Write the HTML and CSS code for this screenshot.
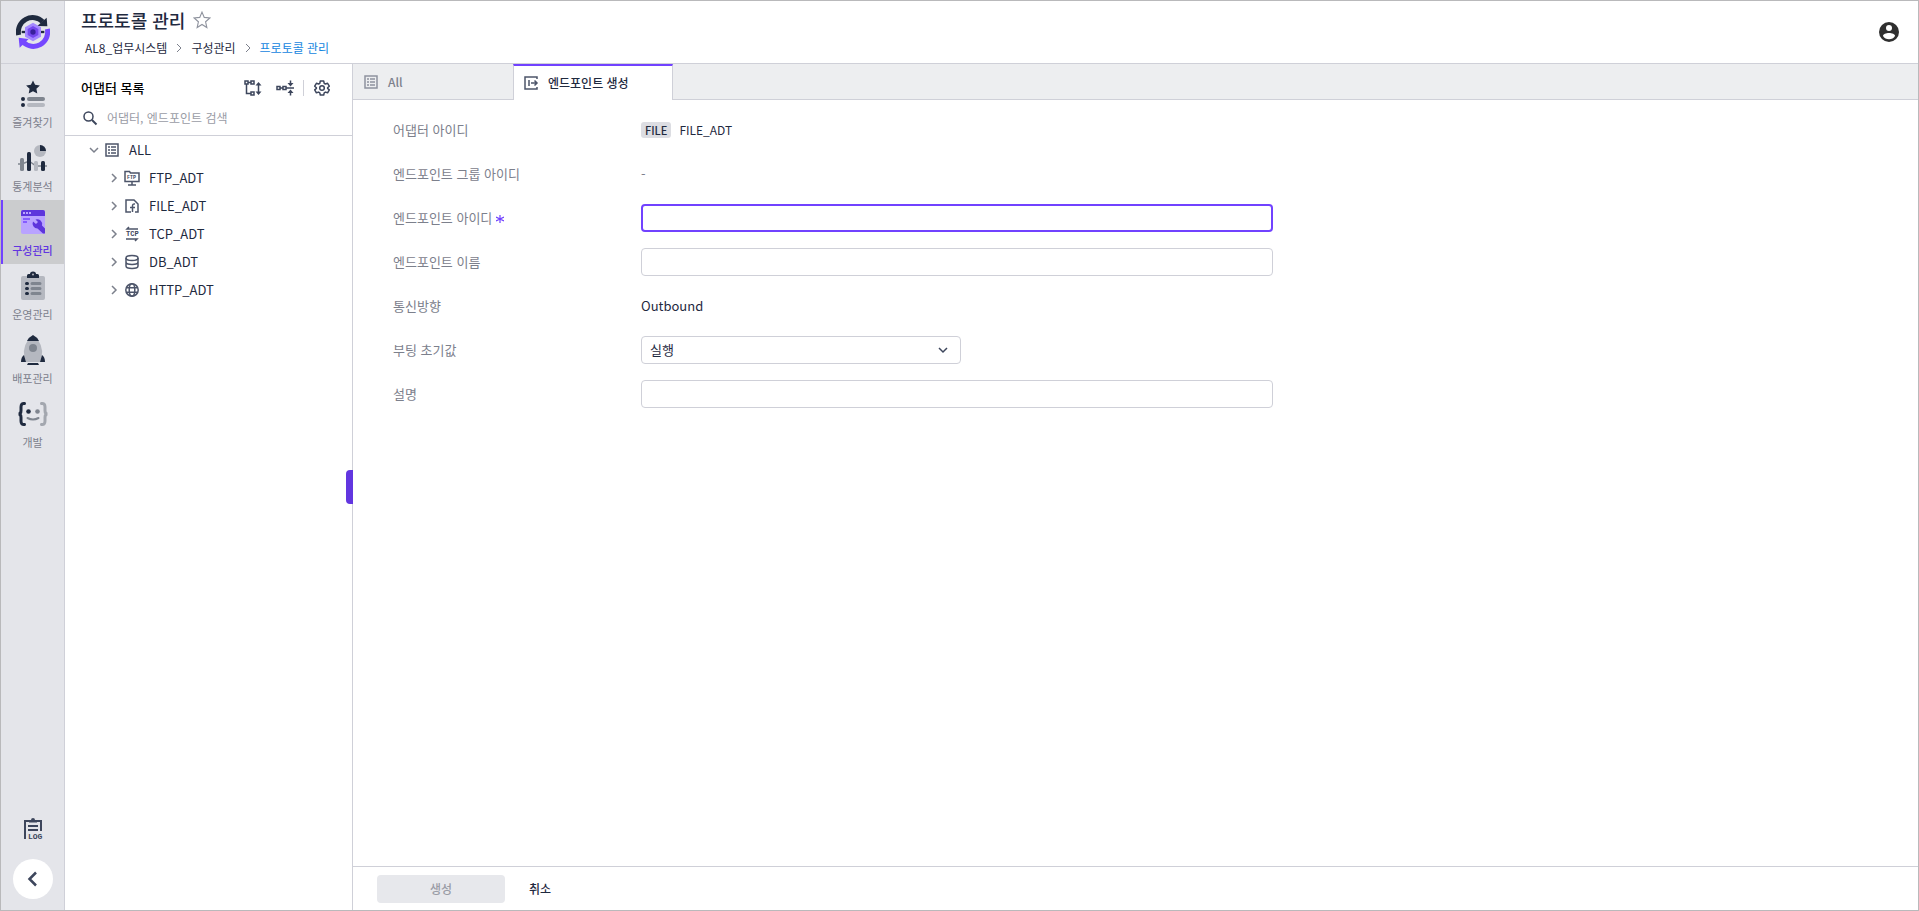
FILE: index.html
```html
<!DOCTYPE html>
<html lang="ko">

<head>
    <meta charset="UTF-8">
    <meta name="viewport" content="width=device-width, initial-scale=1.0">
    <title>프로토콜 관리</title>
    <link rel="stylesheet" href="styles.css">
</head>

<body>
    <div class="app">
        <nav class="sidebar">
            <a class="logo" href="#" aria-label="Home">
                <svg width="34" height="34" viewBox="0 0 102 102">
                    <path d="M8 60A43 43 0 0 1 80 20" fill="none" stroke="#1f2a3f" stroke-width="15" />
                    <path d="M92 8L94 34L64 33Z" fill="#1f2a3f" />
                    <path d="M94 42A43 43 0 0 1 22 82" fill="none" stroke="#7547ff" stroke-width="15" />
                    <path d="M8 68L11 98L38 72Z" fill="#7547ff" />
                    <path d="M17 51H85" stroke="#1f2a3f" stroke-width="7" />
                    <path d="M51 23L75 37V65L51 79L27 65V37Z" fill="#a487ff" />
                    <path d="M51 33L67 42V60L51 69L35 60V42Z" fill="#7547ee" />
                    <circle cx="51" cy="51" r="8" fill="#38209c" />
                </svg>
            </a>
            <div class="menu">
                <a class="menu-item" href="#">
                    <svg width="32" height="32" viewBox="0 0 32 32">
                        <path d="M16 2.5l2.1 4.3 4.8.7-3.5 3.3.9 4.8-4.3-2.3-4.3 2.3.9-4.8-3.5-3.3 4.8-.7z" fill="#1f2a3f" />
                        <circle cx="6" cy="21" r="2" fill="#1f2a3f" />
                        <circle cx="6" cy="27" r="2" fill="#1f2a3f" />
                        <rect x="10" y="19" width="18" height="4" rx="2" fill="#7f858f" />
                        <rect x="10" y="25" width="18" height="4" rx="2" fill="#b5b8c0" />
                    </svg>
                    <span>즐겨찾기</span>
                </a>
                <a class="menu-item" href="#">
                    <svg width="32" height="32" viewBox="0 0 32 32">
                        <circle cx="23" cy="9" r="6" fill="#b5b8c0" />
                        <path d="M23 9V3a6 6 0 0 1 6 6z" fill="#1f2a3f" />
                        <path d="M1 22h4l7-3 7 5h11" fill="none" stroke="#7f858f" stroke-width="1.5" />
                        <rect x="3" y="16" width="4" height="13" rx="1.5" fill="#7f858f" />
                        <rect x="10" y="10" width="4" height="19" rx="1.5" fill="#1f2a3f" />
                        <rect x="17" y="19" width="4" height="10" rx="1.5" fill="#b5b8c0" />
                        <rect x="24" y="19" width="4" height="10" rx="1.5" fill="#1f2a3f" />
                    </svg>
                    <span>통계분석</span>
                </a>
                <a class="menu-item active" href="#">
                    <svg width="32" height="32" viewBox="0 0 32 32">
                        <rect x="4" y="4" width="24" height="24" rx="2" fill="#b9a3ff" />
                        <path d="M6 4h20a2 2 0 0 1 2 2v4H4V6a2 2 0 0 1 2-2z" fill="#5d35dc" />
                        <path d="M6 7h2M9 7h2M12 7h2" stroke="#b9a3ff" stroke-width="2" />
                        <path d="M6 13h7M6 16h4" stroke="#7547ff" stroke-width="1.5" />
                        <path d="M16 15.5l3 2.5 2-2-2.5-2.5a5 5 0 0 1 6.5 6l3 3v5h-2l-5.500-5a5 5 0 0 1-4.500-7z" fill="#5d35dc" />
                    </svg>
                    <span>구성관리</span>
                </a>
                <a class="menu-item" href="#">
                    <svg width="32" height="32" viewBox="0 0 32 32">
                        <rect x="4" y="6" width="24" height="24" rx="2" fill="#b5b8c0" />
                        <path d="M10 8V5.5q0-1.5 1.5-1.5H13a3 2.5 0 0 1 6 0h1.5Q22 4 22 5.5V8z" fill="#1f2a3f" />
                        <circle cx="16" cy="4.5" r="1" fill="#b5b8c0" />
                        <path d="M9.5 13.5h1M9.5 18.5h1M9.5 23.5h1" stroke="#1f2a3f" stroke-width="3" stroke-linecap="round" />
                        <path d="M15 13.5h8M15 18.5h8M15 23.5h8" stroke="#7f858f" stroke-width="3" stroke-linecap="round" />
                    </svg>
                    <span>운영관리</span>
                </a>
                <a class="menu-item" href="#">
                    <svg width="32" height="32" viewBox="0 0 32 32">
                        <path d="M11 6h10q7 10 2 22H9Q4 16 11 6z" fill="#b5b8c0" />
                        <path d="M16 1q4 2 6 6H10q2-4 6-6z" fill="#1f2a3f" />
                        <circle cx="16" cy="14" r="4" fill="#7f858f" />
                        <path d="M7 21L9 28H4q0-5 3-7zM25 21l-2 7h5q0-5-3-7zM11 29h10l1 2H10z" fill="#1f2a3f" />
                    </svg>
                    <span>배포관리</span>
                </a>
                <a class="menu-item" href="#">
                    <svg width="32" height="32" viewBox="0 0 32 32" fill="none" stroke-width="3" stroke-linecap="round">
                        <path d="M7.5 5.5Q4 5 4 9v3.5Q4 16 1.500 16 4 16 4 19.5V23q0 4 3.5 3.5" stroke="#1f2a3f" />
                        <path d="M24.5 5.5Q28 5 28 9v3.5q0 3.5 2.5 3.5Q28 16 28 19.5V23q0 4-3.5 3.5" stroke="#a3a7af" />
                        <path d="M10.5 20q5.5 3 11 0" stroke="#7f858f" stroke-width="2" />
                        <circle cx="11.5" cy="13.5" r="2.3" fill="#1f2a3f" />
                        <circle cx="20.5" cy="13.5" r="2.3" fill="#7f858f" />
                    </svg>
                    <span>개발</span>
                </a>
            </div>
            <div class="sidebar-bottom">
                <button type="button" class="icon-btn" aria-label="Log">
                    <svg width="24" height="24" viewBox="0 0 24 24">
                        <path d="M4 22V4h16v10" fill="none" stroke="#3d465c" stroke-width="2" />
                        <path d="M8 5.5V3h2a2 2 0 0 1 4 0h2v2.5z" fill="#3d465c" />
                        <path d="M7 9h10M7 13h10" stroke="#3d465c" stroke-width="2" />
                        <text x="7" y="22" class="glyph glyph-log">LOG</text>
                    </svg>
                </button>
                <button type="button" class="collapse-btn" aria-label="Collapse menu">
                    <svg width="16" height="16" viewBox="0 0 16 16">
                        <path d="M11 1.5L4.5 8 11 14.5" fill="none" stroke="#3d465c" stroke-width="2.5" />
                    </svg>
                </button>
            </div>
        </nav>

        <div class="page">
            <header class="header">
                <div>
                    <div class="title-row">
                        <h1>프로토콜 관리</h1>
                        <button type="button" class="icon-btn" aria-label="즐겨찾기 추가">
                            <svg width="18" height="18" viewBox="0 0 16 16">
                                <path d="M8 1l2 4.7 5 .5-3.8 3.4 1.1 5.1L8 12l-4.3 2.7 1.1-5.1L1 6.200l5-.5z" fill="none" stroke="#8f939e" />
                            </svg>
                        </button>
                    </div>
                    <div class="breadcrumb">
                        <a href="#">AL8_업무시스템</a>
                        <svg width="8" height="8" viewBox="0 0 8 8"><path d="M2 0l4 4-4 4" /></svg>
                        <a href="#">구성관리</a>
                        <svg width="8" height="8" viewBox="0 0 8 8"><path d="M2 0l4 4-4 4" /></svg>
                        <a class="current" href="#">프로토콜 관리</a>
                    </div>
                </div>
                <button type="button" class="icon-btn" aria-label="User">
                    <svg width="24" height="24" viewBox="0 0 24 24">
                        <circle cx="12" cy="12" r="10" fill="#2f2f2f" />
                        <circle cx="12" cy="8" r="3" fill="#fff" />
                        <path d="M6 16c0-4 12-4 12 0q-2 3.2-6 3.2T6 16z" fill="#fff" />
                    </svg>
                </button>
            </header>

            <div class="body">
                <aside class="tree-panel">
                    <div class="tree-head">
                        <h2>어댑터 목록</h2>
                        <div class="tools">
                            <button type="button" class="icon-btn" aria-label="Expand all">
                                <svg width="20" height="20" viewBox="0 0 20 20" fill="none" stroke="#3d465c" stroke-width="1.5">
                                    <path d="M2 3h3v3H2zM8 3h3v3H8zM8 14h3v3H8zM5 4.5h3M3.500 6v9.500H8M15.500 6v9" />
                                    <path d="M15.500 4l3 3.500h-6zM15.500 17l3-3.500h-6z" fill="#3d465c" stroke="none" />
                                </svg>
                            </button>
                            <button type="button" class="icon-btn" aria-label="Collapse all">
                                <svg width="20" height="20" viewBox="0 0 20 20" fill="none" stroke="#3d465c" stroke-width="1.5">
                                    <path d="M2 8.500h3v3H2zM8 8.500h3v3H8zM5 10h3M11 10h8M15.500 2.500V6M15.500 17.500V14" />
                                    <path d="M15.500 8.500l3-3.500h-6zM15.500 11.500l3 3.500h-6z" fill="#3d465c" stroke="none" />
                                </svg>
                            </button>
                            <span class="divider"></span>
                            <button type="button" class="icon-btn" aria-label="Settings">
                                <svg width="20" height="20" viewBox="0 0 20 20" fill="none" stroke="#3d465c" stroke-width="1.5" stroke-linejoin="round">
                                    <path d="M8.300 3h3.400l.5 2.300 1.200.7 2.200-.7 1.700 2.900-1.700 1.600v.6l1.700 1.500-1.700 2.900-2.200-.7-1.200.7-.5 2.200H8.300l-.5-2.200-1.200-.7-2.200.7-1.700-2.900 1.700-1.500v-.6L2.700 8.200l1.700-2.900 2.200.7 1.200-.7z" />
                                    <circle cx="10" cy="10" r="2.3" />
                                </svg>
                            </button>
                        </div>
                    </div>
                    <div class="search">
                        <svg width="16" height="16" viewBox="0 0 16 16" fill="none" stroke="#3d465c">
                            <circle cx="6.500" cy="6.500" r="4.500" stroke-width="1.500" />
                            <path d="M10 10l4.500 4.500" stroke-width="2" />
                        </svg>
                        <input type="text" aria-label="검색" placeholder="어댑터, 엔드포인트 검색">
                    </div>
                    <ul class="tree">
                        <li>
                            <svg class="arrow" width="12" height="12" viewBox="0 0 12 12"><path d="M2 4l4 4 4-4" /></svg>
                            <svg class="node-icon" width="16" height="16" viewBox="0 0 16 16">
                                <path d="M2 2h12v12H2z" />
                                <path d="M4 5h2M7 5h5M4 8h2M7 8h5M4 11h2M7 11h5" />
                            </svg>
                            <a href="#">ALL</a>
                        </li>
                        <li class="child">
                            <svg class="arrow" width="12" height="12" viewBox="0 0 12 12"><path d="M4 2l4 4-4 4" /></svg>
                            <svg class="node-icon" width="16" height="16" viewBox="0 0 16 16">
                                <path d="M1 11.5v-10h4.500l1 1.500H15v8.500zM8 12v3M4 15h8" />
                                <text x="3" y="9" class="glyph glyph-ftp">FTP</text>
                            </svg>
                            <a href="#">FTP_ADT</a>
                        </li>
                        <li class="child">
                            <svg class="arrow" width="12" height="12" viewBox="0 0 12 12"><path d="M4 2l4 4-4 4" /></svg>
                            <svg class="node-icon" width="16" height="16" viewBox="0 0 16 16">
                                <path d="M7 14H2V2h8l4 4v8h-3" />
                                <path d="M11 6Q8.500 5.500 8.500 8v6M6 9.500h5" />
                            </svg>
                            <a href="#">FILE_ADT</a>
                        </li>
                        <li class="child">
                            <svg class="arrow" width="12" height="12" viewBox="0 0 12 12"><path d="M4 2l4 4-4 4" /></svg>
                            <svg class="node-icon" width="16" height="16" viewBox="0 0 16 16">
                                <path d="M14 3H3l2-2M2 13h11l-2 2" />
                                <text x="2" y="10" class="glyph glyph-tcp">TCP</text>
                            </svg>
                            <a href="#">TCP_ADT</a>
                        </li>
                        <li class="child">
                            <svg class="arrow" width="12" height="12" viewBox="0 0 12 12"><path d="M4 2l4 4-4 4" /></svg>
                            <svg class="node-icon" width="16" height="16" viewBox="0 0 16 16">
                                <ellipse cx="8" cy="4" rx="6" ry="2.5" />
                                <path d="M2 4v8c0 3.300 12 3.300 12 0V4M2 8c0 3.300 12 3.300 12 0" />
                            </svg>
                            <a href="#">DB_ADT</a>
                        </li>
                        <li class="child">
                            <svg class="arrow" width="12" height="12" viewBox="0 0 12 12"><path d="M4 2l4 4-4 4" /></svg>
                            <svg class="node-icon" width="16" height="16" viewBox="0 0 16 16">
                                <circle cx="8" cy="8" r="6.2" />
                                <ellipse cx="8" cy="8" rx="2.8" ry="6.2" />
                                <path d="M2.500 5.800h11M2.500 10.200h11" />
                            </svg>
                            <a href="#">HTTP_ADT</a>
                        </li>
                    </ul>
                    <button type="button" class="panel-handle" aria-label="Toggle panel"></button>
                </aside>

                <main class="content">
                    <div class="tabs">
                        <button type="button" class="tab">
                            <svg class="node-icon" width="16" height="16" viewBox="0 0 16 16">
                                <path d="M2 2h12v12H2z" />
                                <path d="M4 5h2M7 5h5M4 8h2M7 8h5M4 11h2M7 11h5" />
                            </svg>
                            <span>All</span>
                        </button>
                        <button type="button" class="tab active">
                            <svg class="node-icon" width="16" height="16" viewBox="0 0 16 16">
                                <path d="M14 4V2H2v12h12v-2M6 5v6M8 8h6M11.500 5.500L14 8l-2.500 2.500" />
                            </svg>
                            <span>엔드포인트 생성</span>
                        </button>
                    </div>

                    <form class="form" id="endpointForm">
                        <div class="form-row">
                            <span class="label">어댑터 아이디</span>
                            <div class="value value-id"><span class="badge">FILE</span>FILE_ADT</div>
                        </div>
                        <div class="form-row">
                            <span class="label">엔드포인트 그룹 아이디</span>
                            <div class="value muted">-</div>
                        </div>
                        <div class="form-row">
                            <label class="label" for="endpointId">엔드포인트 아이디
                                <svg width="8" height="8" viewBox="0 0 8 8"><path d="M4 0v8M0 2l8 4M8 2L0 6" stroke="#7142ff" stroke-width="1.200" /></svg>
                            </label>
                            <input type="text" class="focused" id="endpointId" name="endpointId" required>
                        </div>
                        <div class="form-row">
                            <label class="label" for="endpointName">엔드포인트 이름</label>
                            <input type="text" id="endpointName" name="endpointName">
                        </div>
                        <div class="form-row">
                            <span class="label">통신방향</span>
                            <div class="value">Outbound</div>
                        </div>
                        <div class="form-row">
                            <label class="label" for="bootValue">부팅 초기값</label>
                            <div class="select-box">
                                <select id="bootValue" name="bootValue">
                                    <option value="run">실행</option>
                                    <option value="stop">중지</option>
                                </select>
                                <svg width="12" height="12" viewBox="0 0 12 12"><path d="M2 4l4 4 4-4" fill="none" stroke="#3d465c" stroke-width="1.500" /></svg>
                            </div>
                        </div>
                        <div class="form-row">
                            <label class="label" for="description">설명</label>
                            <input type="text" id="description" name="description">
                        </div>
                    </form>

                    <footer class="actions">
                        <button type="submit" class="submit-btn" form="endpointForm" disabled>생성</button>
                        <button type="button" class="cancel-btn">취소</button>
                    </footer>
                </main>
            </div>
        </div>
    </div>
</body>

</html>
```
FILE: styles.css
```css
* {
    box-sizing: border-box;
}

body {
    margin: 0;
    color: #1f2a3f;
    font-family: "Noto Sans CJK KR", "Noto Sans", sans-serif;
    font-size: 13px;
    line-height: 20px;
}

h1,
h2,
ul {
    margin: 0;
    padding: 0;
}

a {
    color: inherit;
    text-decoration: none;
}

button,
input,
select {
    margin: 0;
    font: inherit;
    color: inherit;
}

button {
    padding: 0;
    border: none;
    background: none;
    cursor: pointer;
}

svg {
    flex-shrink: 0;
}

.app {
    display: flex;
    height: 100vh;
    overflow: hidden;
    border: 1px solid #b9b9bb;
}

/* left menu */
.sidebar {
    display: flex;
    flex-direction: column;
    width: 64px;
    flex-shrink: 0;
    background-color: #e4e5ea;
    border-right: 1px solid #cfd0d8;
}

.logo {
    display: flex;
    align-items: center;
    justify-content: center;
    height: 63px;
    border-bottom: 1px solid #cfd0d8;
}

.menu {
    flex: 1;
    padding-top: 8px;
}

.menu-item {
    display: flex;
    flex-direction: column;
    align-items: center;
    gap: 3px;
    height: 64px;
    padding-top: 6px;
    color: #7c808c;
    font-size: 11px;
    line-height: 18px;
}

.menu-item.active {
    background-color: #cbccce;
    color: #6236e0;
    font-weight: 500;
    box-shadow: inset 2px 0 #7142ff;
}

.sidebar-bottom {
    display: flex;
    flex-direction: column;
    align-items: center;
    gap: 18px;
    padding-bottom: 11px;
}

.icon-btn {
    display: flex;
}

.collapse-btn {
    display: flex;
    align-items: center;
    justify-content: center;
    width: 40px;
    height: 40px;
    border-radius: 50%;
    background-color: #fff;
}

/* page header */
.page {
    display: flex;
    flex-direction: column;
    flex: 1;
    min-width: 0;
}

.header {
    display: flex;
    align-items: center;
    justify-content: space-between;
    height: 63px;
    padding: 0 17px 0 16px;
    border-bottom: 1px solid #cfd0d8;
}

.title-row {
    display: flex;
    align-items: center;
    gap: 8px;
}

.title-row h1 {
    font-size: 18px;
    font-weight: 500;
    line-height: 28px;
}

.breadcrumb {
    display: flex;
    align-items: center;
    gap: 8px;
    padding: 4px 4px 0;
    font-size: 12px;
}

.breadcrumb svg {
    fill: none;
    stroke: #7c808c;
}

.breadcrumb .current {
    color: #1486e0;
}

.body {
    display: flex;
    flex: 1;
    min-height: 0;
}

/* adapter tree */
.tree-panel {
    position: relative;
    width: 288px;
    flex-shrink: 0;
    border-right: 1px solid #cfd0d8;
}

.tree-head {
    display: flex;
    align-items: center;
    justify-content: space-between;
    height: 48px;
    padding: 0 20px 0 16px;
}

.tree-head h2 {
    color: #000;
    font-size: 13px;
    font-weight: 500;
}

.tools {
    display: flex;
    align-items: center;
    gap: 12px;
}

.tools .divider {
    width: 1px;
    height: 16px;
    margin: 0 -4px;
    background-color: #cfd0d8;
}

.search {
    display: flex;
    align-items: center;
    gap: 9px;
    height: 24px;
    padding: 0 17px 12px;
    border-bottom: 1px solid #cfd0d8;
}

.search input {
    flex: 1;
    min-width: 0;
    padding: 0;
    border: none;
    outline: none;
    font-size: 12px;
}

.search input::placeholder {
    color: #9a9ca6;
}

.tree {
    list-style: none;
}

.tree li {
    display: flex;
    align-items: center;
    height: 28px;
    padding-left: 23px;
}

.tree li.child {
    padding-left: 43px;
}

.tree .node-icon {
    margin: 0 9px 0 4px;
}

.arrow {
    fill: none;
    stroke: #7c808c;
    stroke-width: 1.5;
}

.node-icon {
    fill: none;
    stroke: #4d556a;
    stroke-width: 1.5;
}

.glyph {
    fill: #3d465c;
    stroke: none;
    font-family: "Liberation Mono", monospace;
    font-weight: bold;
}

.glyph-log {
    font-size: 8px;
}

.glyph-ftp {
    font-size: 5px;
}

.glyph-tcp {
    font-size: 7px;
}

.panel-handle {
    position: absolute;
    top: 50%;
    right: -1px;
    width: 7px;
    height: 34px;
    margin-top: -17px;
    border-radius: 4px 0 0 4px;
    background-color: #6236e0;
}

/* content */
.content {
    display: flex;
    flex-direction: column;
    flex: 1;
    min-width: 0;
}

.tabs {
    display: flex;
    height: 36px;
    background-color: #edeef0;
    box-shadow: inset 0 -1px #cfd0d8;
}

.tab {
    display: flex;
    align-items: center;
    gap: 9px;
    width: 160px;
    padding-left: 10px;
    color: #7c808c;
    font-size: 12px;
    font-weight: 500;
}

.tab:not(.active) .node-icon {
    stroke: #8f939e;
}

.tab.active {
    padding-left: 9px;
    border: 1px solid #cfd0d8;
    border-top: 2px solid #7142ff;
    border-bottom: none;
    background-color: #fff;
    color: #1f2a3f;
}

.form {
    display: flex;
    flex-direction: column;
    flex: 1;
    gap: 16px;
    padding: 16px 40px;
}

.form-row {
    display: grid;
    grid-template-columns: 248px minmax(0, 632px);
    align-items: center;
    min-height: 28px;
}

.label {
    color: #7c808c;
}

.value-id {
    display: flex;
    align-items: center;
    gap: 8px;
    font-size: 12px;
}

.value.muted {
    color: #7c808c;
}

.badge {
    padding: 0 4px;
    border-radius: 3px;
    background-color: #dcdde2;
    font-size: 11px;
    font-weight: 500;
    line-height: 16px;
}

.form-row input,
.form-row select {
    width: 100%;
    height: 28px;
    padding: 0 8px;
    border: 1px solid #cfd0d8;
    border-radius: 4px;
    outline: none;
    background-color: #fff;
}

.form-row input.focused,
.form-row input:focus {
    border: 2px solid #7142ff;
}

.select-box {
    position: relative;
    max-width: 320px;
}

.select-box select {
    display: block;
    appearance: none;
}

.select-box svg {
    position: absolute;
    top: 8px;
    right: 12px;
    pointer-events: none;
}

.actions {
    display: flex;
    align-items: center;
    gap: 24px;
    height: 44px;
    padding: 0 24px;
    border-top: 1px solid #cfd0d8;
    font-size: 12px;
    font-weight: 500;
}

.submit-btn {
    width: 128px;
    height: 28px;
    border-radius: 4px;
    background-color: #e7e8ec;
    color: #9a9ca6;
}
```
